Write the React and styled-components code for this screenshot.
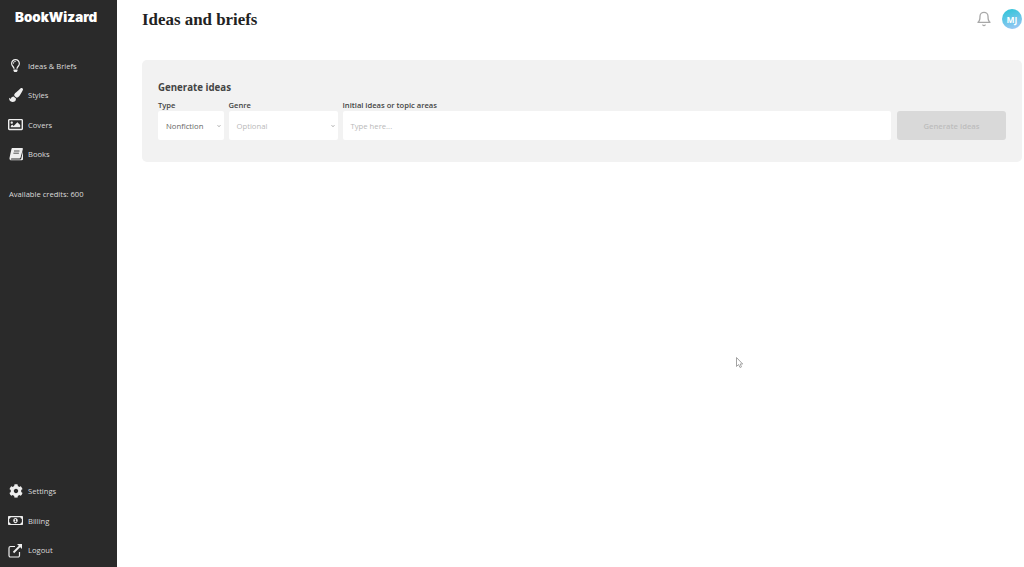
import styled, { createGlobalStyle } from "styled-components";
import { FaRegLightbulb, FaPaintBrush, FaRegImage, FaCog, FaRegMoneyBillAlt, FaChevronDown } from "react-icons/fa";
import { FiBell } from "react-icons/fi";

const GlobalStyle = createGlobalStyle`
  html, body { margin: 0; padding: 0; height: 100%; }
  body { font-family: "Open Sans", sans-serif; background: #fff; }
  * { box-sizing: border-box; }
`;

const Page = styled.div`
  display: flex;
  width: 1024px;
  height: 567px;
  overflow: hidden;
  position: relative;
`;

const Sidebar = styled.aside`
  width: 117px;
  flex-shrink: 0;
  background: #2a2a2a;
  color: #e6e6e6;
  display: flex;
  flex-direction: column;
`;

const Logo = styled.div`
  font-family: Inter, sans-serif;
  font-weight: 900;
  font-size: 13.4px;
  color: #fff;
  padding: 10px 0 0 15px;
  height: 51px;
  line-height: 15px;
  white-space: nowrap;
`;

const NavItem = styled.div`
  height: 29.5px;
  display: flex;
  align-items: center;
  padding-left: 8px;
  font-size: 7.6px;
  gap: 5px;
  color: #dcdcdc;
`;

const IconSlot = styled.span`
  width: 15px;
  height: 15px;
  display: flex;
  align-items: center;
  justify-content: center;
  color: #eee;
  font-size: ${(p) => p.$size || 14}px;
`;

const Credits = styled.div`
  font-size: 7.6px;
  color: #dcdcdc;
  padding: 19px 0 0 9px;
  line-height: 12px;
`;

const Spacer = styled.div`
  flex: 1;
`;

const BottomNav = styled.div`
  padding-bottom: 2px;
`;

const Main = styled.main`
  flex: 1;
  padding: 0 2px 0 25px;
`;

const Header = styled.header`
  height: 60px;
  display: flex;
  justify-content: space-between;
  align-items: flex-start;
  padding-top: 9px;
`;

const Title = styled.h1`
  margin: 0;
  font-family: "Liberation Serif", serif;
  font-weight: 700;
  font-size: 16.9px;
  line-height: 22px;
  color: #222;
`;

const HeaderRight = styled.div`
  display: flex;
  align-items: center;
  gap: 10px;
  color: #a8a8a8;
  font-size: 16px;
`;

const Avatar = styled.div`
  width: 20px;
  height: 20px;
  border-radius: 50%;
  background: linear-gradient(160deg, #27c4d6, #a6c8f8);
  color: #fff;
  font-size: 8.5px;
  font-weight: 700;
  display: flex;
  align-items: center;
  justify-content: center;
`;

const Card = styled.section`
  background: #f2f2f2;
  border-radius: 5px;
  height: 102px;
  padding: 21px 16px 0;
`;

const CardTitle = styled.h2`
  margin: 0 0 6px;
  font-size: 9.7px;
  line-height: 13px;
  font-weight: 700;
  color: #444;
`;

const FormRow = styled.div`
  display: flex;
  gap: 5px;
  align-items: flex-end;
`;

const Field = styled.div`
  display: flex;
  flex-direction: column;
  width: ${(p) => (p.$width ? `${p.$width}px` : "auto")};
  flex: ${(p) => (p.$width ? "none" : 1)};
`;

const Label = styled.label`
  font-size: 7.6px;
  line-height: 11px;
  font-weight: 600;
  color: #444;
`;

const Control = styled.div`
  height: 29px;
  background: #fff;
  border-radius: 2px;
  display: flex;
  align-items: center;
  justify-content: space-between;
  padding: 0 3px 0 8px;
  font-size: 7.7px;
  color: ${(p) => (p.$muted ? "#b9b9b9" : "#666")};
  svg { font-size: 4px; color: #aaa; }
`;

const GenerateButton = styled.div`
  width: 109px;
  height: 29px;
  margin-left: 1px;
  background: #d9d9d9;
  border-radius: 3px;
  color: #bdbdbd;
  font-size: 7.7px;
  font-weight: 600;
  display: flex;
  align-items: center;
  justify-content: center;
`;

const Cursor = styled.svg`
  position: absolute;
  left: 735px;
  top: 356px;
`;

const BookIcon = () => (
  <svg width="14" height="14" viewBox="0 0 14 14">
    <path
      d="M3.6 1h9.6c.5 0 .8.4.7.9L11.6 10.6c-.1.5-.5.8-1 .8H2.7c-.7 0-1 .6-.9 1h9.4c.5 0 .9-.3 1-.7l2-8.2v8.4c0 .6-.7 1.4-1.5 1.4H2.2C1 13.3.3 12.3.5 11.1L2.4 2.2C2.5 1.5 3 1 3.6 1z"
      fill="currentColor"
    />
    <path d="M5 4h5.5M4.4 6.2h5.5" stroke="#2a2a2a" strokeWidth="0.8" />
  </svg>
);

const LogoutIcon = () => (
  <svg width="15" height="15" viewBox="0 0 15 15" fill="none" stroke="currentColor">
    <path d="M11.5 9v3.5A1.5 1.5 0 0 1 10 14H2.5A1.5 1.5 0 0 1 1 12.5V5a1.5 1.5 0 0 1 1.5-1.5H7" strokeWidth="1.2" />
    <path d="M5.5 9.5L13 2" strokeWidth="1.8" />
    <path d="M9 1h5v5z" fill="currentColor" stroke="none" />
  </svg>
);

const NAV = [
  ["Ideas & Briefs", FaRegLightbulb, 13],
  ["Styles", FaPaintBrush, 14],
  ["Covers", FaRegImage, 15],
  ["Books", BookIcon, 14],
];

const BOTTOM = [
  ["Settings", FaCog, 14],
  ["Billing", FaRegMoneyBillAlt, 15],
  ["Logout", LogoutIcon, 15],
];

const renderItem = ([label, Icon, size]) => (
  <NavItem key={label}>
    <IconSlot $size={size}>
      <Icon />
    </IconSlot>
    {label}
  </NavItem>
);

export default function App() {
  return (
    <Page>
      <GlobalStyle />
      <Sidebar>
        <Logo>BookWizard</Logo>
        {NAV.map(renderItem)}
        <Credits>Available credits: 600</Credits>
        <Spacer />
        <BottomNav>{BOTTOM.map(renderItem)}</BottomNav>
      </Sidebar>
      <Main>
        <Header>
          <Title>Ideas and briefs</Title>
          <HeaderRight>
            <FiBell />
            <Avatar>MJ</Avatar>
          </HeaderRight>
        </Header>
        <Card>
          <CardTitle>Generate ideas</CardTitle>
          <FormRow>
            <Field $width={65.5}>
              <Label>Type</Label>
              <Control>
                Nonfiction <FaChevronDown />
              </Control>
            </Field>
            <Field $width={109}>
              <Label>Genre</Label>
              <Control $muted>
                Optional <FaChevronDown />
              </Control>
            </Field>
            <Field>
              <Label>Initial ideas or topic areas</Label>
              <Control $muted>Type here...</Control>
            </Field>
            <GenerateButton>Generate ideas</GenerateButton>
          </FormRow>
        </Card>
      </Main>
      <Cursor width="9" height="13" viewBox="0 0 9 13">
        <path d="M1.5 1.5v9l2-2 1.5 3 1.5-.7-1.4-2.8h2.6z" fill="#fff" stroke="#999" strokeWidth="0.9" />
      </Cursor>
    </Page>
  );
}
